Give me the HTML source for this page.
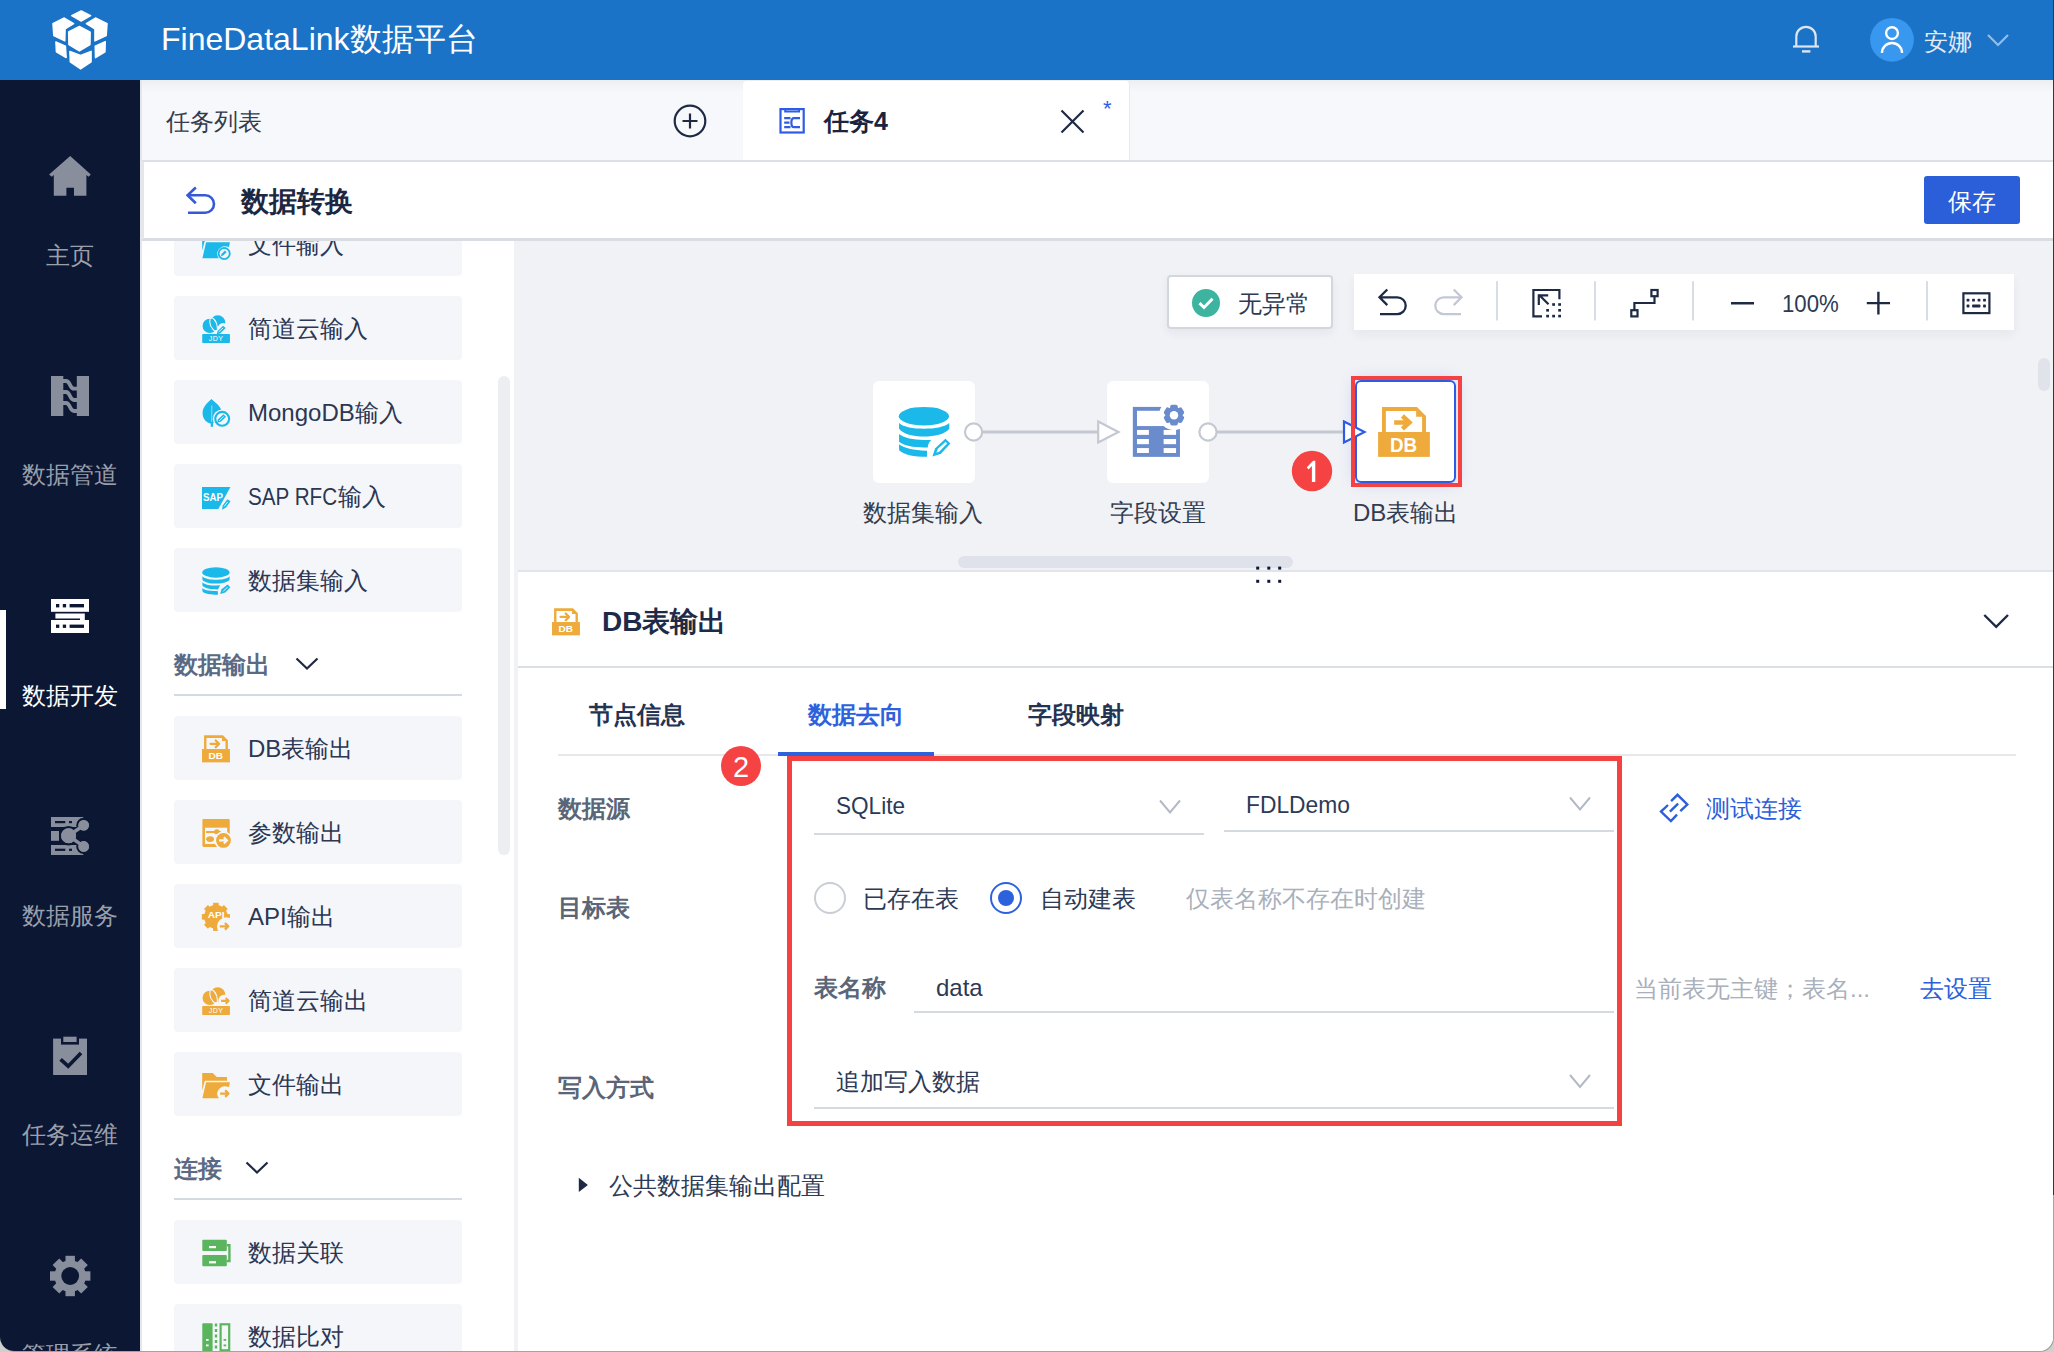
<!DOCTYPE html>
<html><head><meta charset="utf-8">
<style>
*{box-sizing:border-box;margin:0;padding:0}
html,body{width:2054px;height:1352px;overflow:hidden;background:#cfcfcf}
body{font-family:"Liberation Sans",sans-serif;position:relative}
.a{position:absolute}
.t{position:absolute;white-space:nowrap;line-height:1}
#win{position:absolute;left:0;top:0;width:2053px;height:1351px;overflow:hidden;border-radius:0 0 14px 14px;background:#fff;box-shadow:1px 1px 0 #a3a3a3}
#hdr{left:0;top:0;width:2054px;height:80px;background:#1b73c7}
#nav{left:0;top:80px;width:140px;height:1272px;background:#0b1733}
.navt{color:#9a9fab;font-size:24px;width:140px;text-align:center;left:0}
#tabbar{left:140px;top:80px;width:1914px;height:82px;background:#f7f8fb;border-bottom:2px solid #dcdfe5}
#titlebar{left:141px;top:162px;width:1913px;height:79px;background:#fff;border-bottom:3px solid #d9dce2;z-index:5}
.z{z-index:6}
#lp{left:141px;top:241px;width:373px;height:1111px;background:#fff}
.card{position:absolute;left:174px;width:288px;height:64px;background:#f5f6fa;border-radius:4px}
.ct{position:absolute;left:248px;font-size:24px;color:#2b3753;line-height:1;white-space:nowrap}
#canvas{left:514px;top:241px;width:1540px;height:330px;background:#f1f2f6}
#panel{left:518px;top:572px;width:1536px;height:780px;background:#fff}
.lbl{font-size:24px;font-weight:bold;color:#5a6577}
.ul{position:absolute;height:2px;background:#d5d9e0}
</style></head><body>
<div id="win">
<!-- header -->
<div id="hdr" class="a">
  <svg class="a" style="left:30px;top:0" width="100" height="80" viewBox="0 0 100 80" fill="#fff" stroke="#fff" stroke-width="1.4" stroke-linejoin="round">
  <polygon points="41.68,15.73 51.20,10.89 60.63,15.73 51.20,21.10"/>
  <polygon points="22.93,23.52 34.26,18.00 43.65,23.70 35.11,28.90 34.83,40.90 23.77,35.64"/>
  <polygon points="56.33,23.69 65.45,18.00 77.07,23.53 76.23,35.64 64.90,40.90 64.90,28.91"/>
  <polygon points="38.61,31.83 49.39,26.49 60.19,32.12 60.01,44.60 49.40,50.98 38.89,44.60"/>
  <polygon points="25.86,41.89 35.43,46.07 36.21,57.64 26.38,51.98"/>
  <polygon points="65.21,46.05 75.27,41.59 75.01,52.00 65.47,57.68"/>
  <polygon points="39.84,51.33 50.60,55.45 61.10,51.33 61.10,62.02 50.60,68.96 40.28,62.02"/>
  </svg>
  <div class="t" style="left:161px;top:23px;font-size:32px;color:#fff">FineDataLink数据平台</div>
  <svg class="a" style="left:1780px;top:10px" width="240" height="60" viewBox="1780 10 240 60">
   <g fill="none" stroke="#dde5f0" stroke-width="2.2">
    <path d="M1796.3,46.5 V36.5 A9.7,9.7 0 0 1 1815.7,36.5 V46.5"/>
    <path d="M1793,46.5 H1819"/>
   </g>
   <rect x="1802" y="50.2" width="8.4" height="2.4" fill="#dde5f0"/>
   <circle cx="1892" cy="39.8" r="21.9" fill="#3897ee"/>
   <g fill="none" stroke="#fff" stroke-width="2.4">
    <circle cx="1892" cy="33.1" r="5.9"/>
    <path d="M1882,53 A10,10 0 0 1 1902,53"/>
   </g>
   <path d="M1988,35 L1998,45 L2008,35" fill="none" stroke="#93bce9" stroke-width="2.2"/>
  </svg>
  <div class="t" style="left:1924px;top:30px;font-size:24px;color:#e4eaf3">安娜</div>
</div>
<!-- nav -->
<div id="nav" class="a"></div>
<svg class="a" style="left:0;top:0" width="140" height="1352" viewBox="0 0 140 1352">
 <g fill="#888e9c">
  <path d="M70.2,156 L90.8,174.4 L88.5,176.8 L86.4,175 V195.7 H74 V187.7 H66.4 V195.7 H53.8 V175 L51.8,176.8 L49.1,174.4 Z"/>
  <rect x="51" y="376" width="12.3" height="40"/>
  <rect x="76.8" y="376" width="12.2" height="40"/>
  <g fill="none" stroke="#888e9c" stroke-width="3.8">
   <path d="M63,381 H66 C70.5,381 69.5,388.7 74,388.7 H77"/>
   <path d="M63,392 H66 C70.5,392 69.5,400 74,400 H77"/>
   <path d="M63,403 H66 C70.5,403 69.5,411 74,411 H77"/>
  </g>
  <!-- service -->
  <rect x="51" y="817" width="32.3" height="10"/>
  <rect x="51" y="831" width="8" height="9.8"/>
  <rect x="51" y="845" width="32.3" height="10"/>
  <g stroke="#0b1733" stroke-width="2.2">
   <circle cx="68.6" cy="835.7" r="8.6"/>
   <circle cx="83.7" cy="825.3" r="6.4"/>
   <circle cx="83.7" cy="846.4" r="6.4"/>
  </g>
  <path d="M68.6,835.7 L83.7,825.3 M68.6,835.7 L83.7,846.4" stroke="#888e9c" stroke-width="3.6"/>
  <circle cx="68.6" cy="835.7" r="7.5"/>
  <circle cx="83.7" cy="825.3" r="5.3"/>
  <circle cx="83.7" cy="846.4" r="5.3"/>
  <g fill="#0b1733">
   <rect x="55" y="821" width="10.3" height="2.2"/><rect x="69" y="821" width="3" height="2.2"/>
   <rect x="55" y="848.7" width="10.3" height="2.2"/><rect x="69" y="848.7" width="3" height="2.2"/>
  </g>
  <!-- clipboard -->
  <rect x="53.1" y="1038.6" width="33.9" height="36.4"/>
  <rect x="61" y="1036" width="18" height="8.6" fill="#0b1733"/>
  <rect x="63.3" y="1036.7" width="13.3" height="5.3"/>
  <path d="M60.6,1059.3 L68.2,1066.2 L81,1053" fill="none" stroke="#0b1733" stroke-width="3.6"/>
  <!-- gear -->
  <g transform="translate(70.2,1276)">
   <circle r="15.8"/>
   <rect x="-4.7" y="-20.2" width="9.4" height="40.4"/>
   <rect x="-4.7" y="-20.2" width="9.4" height="40.4" transform="rotate(45)"/>
   <rect x="-4.7" y="-20.2" width="9.4" height="40.4" transform="rotate(90)"/>
   <rect x="-4.7" y="-20.2" width="9.4" height="40.4" transform="rotate(135)"/>
   <circle r="8.9" fill="#0b1733"/>
  </g>
 </g>
 <!-- dev (active) -->
 <g fill="#fff">
  <rect x="0" y="610" width="6" height="99"/>
  <rect x="51" y="599" width="38" height="12.8"/>
  <rect x="51" y="620" width="38" height="13"/>
  <path d="M55.4,613.6 H84.8 V620 H80 V618.6 H55.4 Z"/>
  <g fill="#0b1733">
   <rect x="56" y="604" width="3.3" height="3.4"/><rect x="62.8" y="604" width="3.3" height="3.4"/><rect x="69.6" y="604" width="14.4" height="3.4"/>
   <rect x="56" y="624.6" width="3.3" height="3.3"/><rect x="62.8" y="624.6" width="3.3" height="3.3"/><rect x="69.6" y="624.6" width="14.4" height="3.3"/>
  </g>
 </g>
</svg>
<div class="t navt" style="top:244px">主页</div>
<div class="t navt" style="top:463px">数据管道</div>
<div class="t navt" style="top:684px;color:#fff">数据开发</div>
<div class="t navt" style="top:904px">数据服务</div>
<div class="t navt" style="top:1123px">任务运维</div>
<div class="t navt" style="top:1343px">管理系统</div>
<!-- tab bar -->
<div id="tabbar" class="a"></div>
<div class="a" style="left:140px;top:80px;width:1914px;height:12px;background:linear-gradient(#eceef2,#f7f8fb)"></div>
<div class="t" style="left:166px;top:110px;font-size:24px;color:#333c4e">任务列表</div>
<svg class="a" style="left:670px;top:101px" width="40" height="40" viewBox="0 0 40 40" fill="none" stroke="#1e2a44" stroke-width="2.2">
 <circle cx="20" cy="20" r="15.3"/><path d="M20,12.5 V27.5 M12.5,20 H27.5"/>
</svg>
<div class="a" style="left:743px;top:81px;width:387px;height:79px;background:#fff;border-radius:4px 4px 0 0;border-right:1.5px solid #e8eaef"></div>
<svg class="a" style="left:770px;top:100px" width="44" height="44" viewBox="770 100 44 44" fill="none" stroke="#2f5ce6" stroke-width="2.2">
 <rect x="780.5" y="109.1" width="23.2" height="23.4"/>
 <path d="M785.2,109 V111.6 H799 V109" stroke-width="2"/>
 <path d="M784.2,118.2 H790.5 M784.2,122.6 H789.5 M784.2,127.1 H790.5" stroke-width="2.2"/>
 <path d="M800,118.2 H794 C790.5,118.2 790.5,127.1 794,127.1 H800" stroke-width="2.2"/>
</svg>
<div class="t" style="left:824px;top:109px;font-size:25px;font-weight:bold;color:#1a2440">任务4</div>
<svg class="a" style="left:1056px;top:105px" width="34" height="34" viewBox="0 0 34 34" fill="none" stroke="#1e2a44" stroke-width="2.2">
 <path d="M5.5,5.5 L27.5,27.5 M27.5,5.5 L5.5,27.5"/>
</svg>
<div class="t" style="left:1103px;top:98px;font-size:22px;color:#2f5ce6">*</div>
<div id="titlebar" class="a"></div>
<svg class="a z" style="left:180px;top:180px" width="40" height="40" viewBox="180 180 40 40" fill="none" stroke="#3559d9" stroke-width="2.6">
 <path d="M195.8,187.5 L187.6,195.3 L195.8,203.2"/>
 <path d="M187.6,195.3 H205.3 A8.7,8.7 0 0 1 205.3,212.7 H188"/>
</svg>
<div class="t z" style="left:241px;top:188px;font-size:28px;font-weight:bold;color:#1c2742">数据转换</div>
<div class="a z" style="left:1924px;top:176px;width:96px;height:48px;background:#2b5fd9;border-radius:3px"></div>
<div class="t z" style="left:1948px;top:190px;font-size:24px;color:#fff">保存</div>
<div id="lp" class="a"></div>
<div class="card" style="top:212px"></div>
<div class="ct" style="top:233px">文件输入</div>
<svg class="a" style="left:195px;top:221px" width="45" height="50" viewBox="0 0 1217 1352"><path d="M195,800 V325 H480 L590,430 H865 V535 H270 C250,560 240,650 195,800 Z" fill="#1bb8ea"/>
<path d="M200,1010 L300,575 H945 L920,700 C880,690 830,680 790,680 C690,690 600,790 600,880 C600,930 620,980 650,1010 Z" fill="#1bb8ea"/>
<circle cx="790" cy="880" r="150" fill="none" stroke="#1bb8ea" stroke-width="50"/><path d="M700,950 L715,890 L810,800 L855,845 L760,935 Z" fill="#1bb8ea"/></svg>
<div class="card" style="top:296px"></div>
<div class="ct" style="top:317px">简道云输入</div>
<svg class="a" style="left:195px;top:305px" width="45" height="50" viewBox="0 0 1217 1352"><circle cx="400" cy="565" r="195" fill="#1bb8ea"/><circle cx="615" cy="480" r="205" fill="#1bb8ea"/>
<path d="M410,360 C370,500 430,640 600,760" fill="none" stroke="#f5f6fa" stroke-width="30"/>
<path d="M460,340 C600,430 620,600 600,760" fill="none" stroke="#f5f6fa" stroke-width="30"/>
<rect x="130" y="760" width="250" height="30" fill="#f5f6fa"/><rect x="560" y="760" width="100" height="30" fill="#f5f6fa"/>
<circle cx="760" cy="640" r="150" fill="#f5f6fa"/><path d="M590,790 L610,700 L760,560 L830,625 L680,770 Z" fill="#1bb8ea"/><path d="M640,730 L760,620" stroke="#f5f6fa" stroke-width="24"/>
<rect x="195" y="785" width="750" height="240" rx="20" fill="#1bb8ea"/>
<text x="375" y="968" font-size="190" font-family="Liberation Sans" fill="#fff" textLength="380" lengthAdjust="spacing">JDY</text></svg>
<div class="card" style="top:380px"></div>
<div class="ct" style="top:401px">MongoDB输入</div>
<svg class="a" style="left:195px;top:390px" width="45" height="50" viewBox="0 0 1217 1352"><path d="M445,245 C330,350 205,460 205,620 C205,780 300,870 420,905 L470,905 C600,860 720,760 720,600 C720,460 560,350 445,245 Z" fill="#1bb8ea"/>
<path d="M455,420 L450,890" stroke="#8dd6f2" stroke-width="30"/>
<rect x="425" y="860" width="60" height="135" fill="#1bb8ea"/>
<circle cx="735" cy="780" r="255" fill="#f5f6fa"/>
<circle cx="735" cy="780" r="188" fill="none" stroke="#1bb8ea" stroke-width="58"/>
<path d="M595,885 L625,790 L770,655 L840,725 L700,860 Z" fill="#1bb8ea"/>
<path d="M655,835 L775,715" stroke="#f5f6fa" stroke-width="26"/></svg>
<div class="card" style="top:464px"></div>
<div class="ct" style="top:485px"><span style="display:inline-block;transform:scaleX(0.86);transform-origin:0 0;width:90px">SAP RFC</span>输入</div>
<svg class="a" style="left:195px;top:474px" width="45" height="50" viewBox="0 0 1217 1352"><path d="M190,350 H985 L645,945 H190 Z" fill="#1bb8ea"/>
<text x="218" y="742" font-size="300" font-weight="bold" font-family="Liberation Sans" fill="#fff" textLength="540" lengthAdjust="spacingAndGlyphs">SAP</text>
<path d="M640,975 L990,345" stroke="#f5f6fa" stroke-width="45"/>
<path d="M730,965 L750,850 L875,680 L960,740 L840,905 Z" fill="#1bb8ea"/>
<path d="M790,875 L885,750" stroke="#f5f6fa" stroke-width="26"/></svg>
<div class="card" style="top:548px"></div>
<div class="ct" style="top:569px">数据集输入</div>
<svg class="a" style="left:195px;top:556px" width="45" height="50" viewBox="0 0 1217 1352"><ellipse cx="565" cy="445" rx="370" ry="140" fill="#1bb8ea"/>
<path d="M200,545 C260,620 430,640 565,640 C700,640 880,620 935,545 V640 C880,720 700,745 565,745 C430,745 250,720 200,640 Z" fill="#1bb8ea"/>
<path d="M200,710 C260,780 430,800 565,800 L680,790 L620,905 C430,905 250,880 200,800 Z" fill="#1bb8ea"/>
<path d="M200,865 C260,935 430,950 620,950 V1045 C430,1045 250,1020 200,950 Z" fill="#1bb8ea"/>
<path d="M680,1030 L720,900 L880,770 L955,845 L820,990 Z" fill="#1bb8ea"/>
<path d="M760,960 L880,840" stroke="#f5f6fa" stroke-width="26"/></svg>
<div class="card" style="top:716px"></div>
<div class="ct" style="top:737px">DB表输出</div>
<svg class="a" style="left:195px;top:725px" width="45" height="50" viewBox="0 0 1217 1352"><path d="M245,650 V275 H755 L890,415 V650 Z" fill="#eeaa3a"/>
<path d="M310,650 V350 H730 V435 H825 V650 Z" fill="#f5f6fa"/>
<path d="M420,510 H650 M560,420 L650,510 L560,600" fill="none" stroke="#eeaa3a" stroke-width="62" stroke-linecap="round" stroke-linejoin="round"/>
<rect x="190" y="650" width="755" height="360" fill="#eeaa3a"/>
<text x="368" y="920" font-size="262" font-weight="bold" font-family="Liberation Sans" fill="#fff" textLength="392" lengthAdjust="spacingAndGlyphs">DB</text></svg>
<div class="card" style="top:800px"></div>
<div class="ct" style="top:821px">参数输出</div>
<svg class="a" style="left:195px;top:809px" width="45" height="50" viewBox="0 0 1217 1352"><rect x="200" y="270" width="740" height="755" rx="30" fill="#eeaa3a"/>
<rect x="270" y="505" width="600" height="440" fill="#f5f6fa"/>
<path d="M300,620 H700 M300,815 H500" stroke="#eeaa3a" stroke-width="52"/>
<ellipse cx="590" cy="615" rx="75" ry="70" fill="#eeaa3a"/><ellipse cx="410" cy="815" rx="100" ry="75" fill="#eeaa3a"/>
<circle cx="770" cy="850" r="250" fill="#f5f6fa"/>
<circle cx="770" cy="850" r="200" fill="#eeaa3a"/>
<path d="M650,850 H860 M780,765 L865,850 L780,935" fill="none" stroke="#f5f6fa" stroke-width="58"/></svg>
<div class="card" style="top:884px"></div>
<div class="ct" style="top:905px">API输出</div>
<svg class="a" style="left:195px;top:893px" width="45" height="50" viewBox="0 0 1217 1352"><g transform="translate(565,645)" fill="#eeaa3a"><circle r="320"/>
<rect x="-75" y="-380" width="150" height="760"/><rect x="-75" y="-380" width="150" height="760" transform="rotate(45)"/><rect x="-75" y="-380" width="150" height="760" transform="rotate(90)"/><rect x="-75" y="-380" width="150" height="760" transform="rotate(135)"/></g>
<circle cx="850" cy="910" r="255" fill="#f5f6fa"/>
<text x="345" y="685" font-size="270" font-weight="bold" font-family="Liberation Sans" fill="#fff" textLength="455" lengthAdjust="spacingAndGlyphs">API</text>
<path d="M670,900 H900 M810,810 L900,900 L810,990" fill="none" stroke="#eeaa3a" stroke-width="62" stroke-linejoin="round"/></svg>
<div class="card" style="top:968px"></div>
<div class="ct" style="top:989px">简道云输出</div>
<svg class="a" style="left:195px;top:977px" width="45" height="50" viewBox="0 0 1217 1352"><circle cx="400" cy="565" r="195" fill="#eeaa3a"/><circle cx="615" cy="480" r="205" fill="#eeaa3a"/>
<path d="M410,360 C370,500 430,640 600,760" fill="none" stroke="#f5f6fa" stroke-width="30"/>
<path d="M460,340 C600,430 620,600 600,760" fill="none" stroke="#f5f6fa" stroke-width="30"/>
<rect x="130" y="760" width="250" height="30" fill="#f5f6fa"/><rect x="560" y="760" width="100" height="30" fill="#f5f6fa"/>
<circle cx="790" cy="640" r="160" fill="#f5f6fa"/><path d="M705,645 H905 M830,565 L910,645 L830,725" fill="none" stroke="#eeaa3a" stroke-width="58" stroke-linejoin="round"/>
<rect x="195" y="785" width="750" height="240" rx="20" fill="#eeaa3a"/>
<text x="375" y="968" font-size="190" font-family="Liberation Sans" fill="#fff" textLength="380" lengthAdjust="spacing">JDY</text></svg>
<div class="card" style="top:1052px"></div>
<div class="ct" style="top:1073px">文件输出</div>
<svg class="a" style="left:195px;top:1061px" width="45" height="50" viewBox="0 0 1217 1352"><path d="M195,800 V325 H480 L590,430 H865 V535 H270 C250,560 240,650 195,800 Z" fill="#eeaa3a"/>
<path d="M200,1010 L300,575 H945 L920,700 C880,690 830,680 790,680 C690,690 600,790 600,880 C600,930 620,980 650,1010 Z" fill="#eeaa3a"/>
<path d="M680,880 H900 M815,790 L905,880 L815,970" fill="none" stroke="#eeaa3a" stroke-width="62" stroke-linejoin="round"/></svg>
<div class="card" style="top:1220px"></div>
<div class="ct" style="top:1241px">数据关联</div>
<div class="card" style="top:1304px"></div>
<div class="ct" style="top:1325px">数据比对</div>
<svg class="a" style="left:195px;top:1229px" width="45" height="123" viewBox="195 1229 45 123">
<rect x="202.3" y="1239.7" width="24.5" height="11.3" rx="1" fill="#5bb55f"/><rect x="202.3" y="1255" width="24.5" height="11.3" rx="1" fill="#5bb55f"/>
<path d="M226.8,1245.2 H229.4 V1261 H226.8" fill="none" stroke="#5bb55f" stroke-width="2.4"/>
<rect x="209" y="1246" width="7" height="2.2" fill="#fff"/><rect x="209" y="1261.2" width="7" height="2.2" fill="#fff"/>
<rect x="202.3" y="1323.2" width="10.3" height="28" rx="1" fill="#5bb55f"/>
<path d="M216,1323.5 V1351" stroke="#5bb55f" stroke-width="2.4" stroke-dasharray="3,2.5"/>
<rect x="220.6" y="1324.3" width="8.6" height="26" fill="none" stroke="#5bb55f" stroke-width="2.2"/>
<rect x="206" y="1339" width="2.6" height="1.8" fill="#fff"/><rect x="206" y="1344.5" width="2.6" height="1.8" fill="#fff"/>
<rect x="223.6" y="1339" width="2.6" height="1.8" fill="#5bb55f"/><rect x="223.6" y="1344.5" width="2.6" height="1.8" fill="#5bb55f"/>
</svg>
<div class="t" style="left:174px;top:653px;font-size:24px;font-weight:bold;color:#5b6a84">数据输出</div>
<svg class="a" style="left:293.5px;top:654px" width="26" height="20" viewBox="0 0 26 20"><path d="M2.5,4.5 L13,14.5 L23.5,4.5" fill="none" stroke="#1e2a44" stroke-width="2.2"/></svg>
<div class="a" style="left:174px;top:694px;width:288px;height:2px;background:#d5dae2"></div>
<div class="t" style="left:174px;top:1157px;font-size:24px;font-weight:bold;color:#5b6a84">连接</div>
<svg class="a" style="left:244.0px;top:1158px" width="26" height="20" viewBox="0 0 26 20"><path d="M2.5,4.5 L13,14.5 L23.5,4.5" fill="none" stroke="#1e2a44" stroke-width="2.2"/></svg>
<div class="a" style="left:174px;top:1198px;width:288px;height:2px;background:#d5dae2"></div>
<div class="a" style="left:498px;top:376px;width:12px;height:479px;background:#eceef2;border-radius:6px"></div>
<div id="canvas" class="a"></div>
<div class="a" style="left:140px;top:80px;width:2px;height:1272px;background:#e3e6ea;z-index:7"></div>
<div class="a" style="left:142px;top:161px;width:2px;height:78px;background:#e3e6ea;z-index:7"></div>
<!-- status -->
<div class="a" style="left:1167px;top:275px;width:166px;height:54px;background:#fff;border:2px solid #d2d6dd;border-radius:4px;box-shadow:0 4px 10px rgba(30,42,68,0.06)"></div>
<svg class="a" style="left:1190px;top:287px" width="32" height="32" viewBox="0 0 32 32"><circle cx="16" cy="16" r="14" fill="#3db4a0"/><path d="M9.5,16.2 L14,20.5 L22.5,11.8" fill="none" stroke="#fff" stroke-width="3"/></svg>
<div class="t" style="left:1238px;top:292px;font-size:24px;color:#2c3a55">无异常</div>
<!-- toolbar -->
<div class="a" style="left:1354px;top:274px;width:660px;height:56px;background:#fff;box-shadow:0 5px 10px rgba(30,42,68,0.05)"></div>
<svg class="a" style="left:1354px;top:274px" width="660" height="56" viewBox="1354 274 660 56" fill="none" stroke="#1e2a44" stroke-width="2.3">
 <path d="M1387.3,289.5 L1379.5,297.3 L1387.3,305.1 M1379.5,297.3 H1397.3 A8.4,8.4 0 0 1 1397.3,314.1 H1380"/>
 <path d="M1453.7,289.5 L1461.5,297.3 L1453.7,305.1 M1461.5,297.3 H1443.7 A8.4,8.4 0 0 0 1443.7,314.1 H1461" stroke="#c3c9d3"/>
 <path d="M1497,281.3 V320.5 M1595,281.3 V320.5 M1693,281.3 V320.5 M1927,281.3 V320.5" stroke="#d8dce4" stroke-width="2"/>
 <path d="M1542,316.4 H1533.4 V290 H1559.4 V299.2" stroke-width="2.2"/>
 <path d="M1548.5,304.3 L1539,294.8 M1538.8,305 V295.4 H1548.2" stroke-width="2.2"/>
 <g fill="#1e2a44" stroke="none">
  <rect x="1552.2" y="303.2" width="2.8" height="2.6"/><rect x="1558.2" y="303.2" width="2.8" height="2.6"/>
  <rect x="1558.2" y="309" width="2.8" height="2.6"/><rect x="1546.2" y="309" width="2.8" height="2.6"/>
  <rect x="1546.2" y="314.8" width="2.8" height="2.6"/><rect x="1552.2" y="314.8" width="2.8" height="2.6"/><rect x="1558.2" y="314.8" width="2.8" height="2.6"/>
 </g>
 <rect x="1651.4" y="290" width="6.2" height="6.2" stroke-width="2.2"/>
 <rect x="1631.3" y="310.2" width="6.2" height="6.2" stroke-width="2.2"/>
 <path d="M1654.5,296.5 V303 H1634.4 V310" stroke-width="2.2"/>
 <path d="M1731,303.2 H1754 M1866.8,303.1 H1890 M1878.4,291.8 V314.4" stroke-width="2.4"/>
 <rect x="1963.4" y="293.3" width="26" height="19.8" stroke-width="2.2"/>
 <g fill="#1e2a44" stroke="none">
  <rect x="1966.6" y="298.8" width="2.8" height="2.8" rx="0.6"/><rect x="1972.1" y="298.8" width="2.8" height="2.8" rx="0.6"/><rect x="1977.6" y="298.8" width="2.8" height="2.8" rx="0.6"/><rect x="1983.1" y="298.8" width="2.8" height="2.8" rx="0.6"/>
  <rect x="1966.6" y="304.6" width="2.8" height="2.8" rx="0.6"/><rect x="1972.1" y="304.6" width="8.3" height="2.8" rx="0.6"/><rect x="1983.1" y="304.6" width="2.8" height="2.8" rx="0.6"/>
 </g>
</svg>
<div class="t" style="left:1782px;top:292px;font-size:24px;color:#2c3a55"><span style="display:inline-block;transform:scaleX(0.925);transform-origin:0 0">100%</span></div>
<!-- flow -->
<div class="a" style="left:873px;top:381px;width:102px;height:102px;background:#fff;border-radius:6px"></div>
<div class="a" style="left:1107px;top:381px;width:102px;height:102px;background:#fff;border-radius:6px"></div>
<div class="a" style="left:1355px;top:380px;width:101px;height:103px;background:#fff;border:2px solid #2e5be6;border-radius:6px;box-shadow:0 0 16px rgba(46,91,230,0.22)"></div>
<svg class="a" style="left:850px;top:400px" width="520" height="64" viewBox="850 400 520 64">
 <path d="M983,432 H1098 M1217,432 H1343" stroke="#c3c8d1" stroke-width="3.2"/>
 <circle cx="973.6" cy="432" r="8.6" fill="#fff" stroke="#c3c8d1" stroke-width="2.2"/>
 <circle cx="1208" cy="432" r="8.6" fill="#fff" stroke="#c3c8d1" stroke-width="2.2"/>
 <path d="M1098.2,421.5 L1118.5,432 L1098.2,442.5 Z" fill="#fff" stroke="#c3c8d1" stroke-width="2.2"/>
 <path d="M1344,421.5 L1364.5,432 L1344,442.5 Z" fill="#fff" stroke="#2e5be6" stroke-width="2.2"/>
</svg>
<svg class="a" style="left:890px;top:395px" width="70" height="70" viewBox="0 0 1352 1352" fill="#1bb8ea">
 <ellipse cx="655" cy="410" rx="485" ry="180"/>
 <path d="M175,540 C260,620 450,650 655,650 C860,650 1050,620 1145,540 V650 C1060,760 860,800 655,800 C450,800 260,760 175,650 Z"/>
 <path d="M175,755 C260,830 450,870 655,870 L795,870 C760,900 730,960 730,1015 C700,1015 680,1015 655,1015 C450,1015 260,980 175,905 Z"/>
 <path d="M175,950 C260,1020 450,1065 715,1075 V1195 C450,1195 260,1150 175,1060 Z"/>
 <path d="M820,1190 L870,1035 L1070,845 L1165,935 L985,1135 Z"/>
 <path d="M895,1115 L925,1040 L1075,905 L1105,935 L955,1090 Z" fill="#fff"/>
</svg>
<svg class="a" style="left:1123px;top:395px" width="70" height="70" viewBox="0 0 1352 1352" fill="#6a8bcc">
 <rect x="190" y="230" width="910" height="965"/>
 <rect x="270" y="305" width="700" height="295" fill="#fff"/>
 <g fill="#fff"><rect x="270" y="675" width="230" height="95"/><rect x="270" y="850" width="230" height="100"/><rect x="270" y="1025" width="230" height="95"/>
 <rect x="785" y="675" width="240" height="95"/><rect x="785" y="850" width="240" height="100"/><rect x="785" y="1025" width="240" height="95"/></g>
 <circle cx="985" cy="390" r="290" fill="#fff"/>
 <g transform="translate(985,390)"><circle r="165"/>
  <rect x="-75" y="-200" width="150" height="400" rx="40"/><rect x="-75" y="-200" width="150" height="400" rx="40" transform="rotate(60)"/><rect x="-75" y="-200" width="150" height="400" rx="40" transform="rotate(120)"/>
  <circle r="82" fill="#fff"/></g>
</svg>
<svg class="a" style="left:1368px;top:395px" width="70" height="70" viewBox="0 0 1352 1352" fill="#eeaa3a">
 <path d="M270,715 V230 H945 L1120,405 V715 Z"/>
 <path d="M345,715 V310 H930 V420 H1045 V715 Z" fill="#fff"/>
 <path d="M505,530 H800 M665,405 L800,530 L665,655" fill="none" stroke="#eeaa3a" stroke-width="88"/>
 <rect x="195" y="715" width="1000" height="480"/>
 <text x="425" y="1095" font-size="375" font-weight="bold" font-family="Liberation Sans" fill="#fff" textLength="525" lengthAdjust="spacingAndGlyphs">DB</text>
</svg>
<div class="a" style="left:1351px;top:376px;width:111px;height:111px;border:4.5px solid #f44242"></div>
<svg class="a" style="left:1288px;top:447px" width="48" height="48" viewBox="1288 447 48 48"><circle cx="1312" cy="471" r="20.2" fill="#f54343"/><path d="M1306.8,467.2 L1313.2,460.8 H1315.3 V482 H1311.9 V466 L1308.6,469.6 Z" fill="#fff"/></svg>
<div class="t" style="left:863px;top:501px;font-size:24px;color:#333d50">数据集输入</div>
<div class="t" style="left:1110px;top:501px;font-size:24px;color:#333d50">字段设置</div>
<div class="t" style="left:1353px;top:501px;font-size:24px;color:#333d50">DB表输出</div>
<div class="a" style="left:958px;top:556px;width:335px;height:12px;border-radius:6px;background:#dfe2ea"></div>
<div class="a" style="left:2038px;top:358px;width:12px;height:33px;border-radius:6px;background:#e0e3ea"></div>
<div id="panel" class="a"></div>
<div class="a" style="left:514px;top:570px;width:4px;height:782px;background:#f1f2f6"></div>
<div class="a" style="left:518px;top:570px;width:1536px;height:2px;background:#e1e4ea"></div>
<svg class="a" style="left:1250px;top:562px" width="40" height="26" viewBox="1250 562 40 26" fill="#0f1a36"><rect x="1256.2" y="566.6" width="3" height="3"/><rect x="1267.3" y="566.6" width="3" height="3"/><rect x="1278.2" y="566.6" width="3" height="3"/><rect x="1256.2" y="579.8" width="3" height="3"/><rect x="1267.3" y="579.8" width="3" height="3"/><rect x="1278.2" y="579.8" width="3" height="3"/></svg>
<svg class="a" style="left:545px;top:598px" width="45" height="50" viewBox="0 0 1217 1352">
<path d="M245,650 V275 H755 L890,415 V650 Z" fill="#eeaa3a"/>
<path d="M310,650 V350 H730 V435 H825 V650 Z" fill="#fff"/>
<path d="M420,510 H650 M560,420 L650,510 L560,600" fill="none" stroke="#eeaa3a" stroke-width="62" stroke-linecap="round" stroke-linejoin="round"/>
<rect x="190" y="650" width="755" height="360" fill="#eeaa3a"/>
<text x="368" y="920" font-size="262" font-weight="bold" font-family="Liberation Sans" fill="#fff" textLength="392" lengthAdjust="spacingAndGlyphs">DB</text></svg>
<div class="t" style="left:602px;top:608px;font-size:28px;font-weight:bold;color:#1e2b48">DB表输出</div>
<svg class="a" style="left:1978px;top:606px" width="36" height="28" viewBox="1978 606 36 28"><path d="M1984.3,615 L1996.2,626.8 L2008,615" fill="none" stroke="#1e2a44" stroke-width="2.4"/></svg>
<div class="a" style="left:518px;top:666px;width:1536px;height:2px;background:#dadee5"></div>
<div class="t" style="left:589px;top:702.5px;font-size:24px;color:#243352;font-weight:bold;">节点信息</div>
<div class="t" style="left:808px;top:702.5px;font-size:24px;color:#2e62dc;font-weight:bold;">数据去向</div>
<div class="t" style="left:1028px;top:702.5px;font-size:24px;color:#243352;font-weight:bold;">字段映射</div>
<div class="a" style="left:558px;top:754px;width:1458px;height:1.5px;background:#e6e8ec"></div>
<div class="a" style="left:778px;top:752px;width:156px;height:3.6px;background:#2e62dc"></div>
<div class="t" style="left:558px;top:796.5px;font-size:24px;color:#5a6577;font-weight:bold;">数据源</div>
<div class="t" style="left:558px;top:896.0px;font-size:24px;color:#5a6577;font-weight:bold;">目标表</div>
<div class="t" style="left:558px;top:1075.5px;font-size:24px;color:#5a6577;font-weight:bold;">写入方式</div>
<div class="t" style="left:836px;top:794px;font-size:24px;color:#2c3a55;"><span style="display:inline-block;transform:scaleX(0.94);transform-origin:0 0">SQLite</span></div>
<div class="ul" style="left:814px;top:833px;width:390px"></div>
<div class="t" style="left:1246px;top:793.0px;font-size:24px;color:#2c3a55;"><span style="display:inline-block;transform:scaleX(0.95);transform-origin:0 0">FDLDemo</span></div>
<div class="ul" style="left:1224px;top:830px;width:390px"></div>
<div class="t" style="left:836px;top:1070.0px;font-size:24px;color:#2c3a55;">追加写入数据</div>
<div class="ul" style="left:814px;top:1107px;width:800px"></div>
<div class="t" style="left:814px;top:975.5px;font-size:24px;color:#5a6577;font-weight:bold;">表名称</div>
<div class="t" style="left:936px;top:975.5px;font-size:24px;color:#2c3a55;">data</div>
<div class="ul" style="left:914px;top:1010.5px;width:700px"></div>
<svg class="a" style="left:1150px;top:790px" width="40" height="30" viewBox="1150 790 40 30"><path d="M1160,800.5 L1170,812.5 L1180,800.5" fill="none" stroke="#b3bac6" stroke-width="2"/></svg>
<svg class="a" style="left:1560px;top:787px" width="40" height="30" viewBox="1560 787 40 30"><path d="M1570,797.5 L1580,809.5 L1590,797.5" fill="none" stroke="#b3bac6" stroke-width="2"/></svg>
<svg class="a" style="left:1560px;top:1065px" width="40" height="30" viewBox="1560 1065 40 30"><path d="M1570,1075 L1580,1087 L1590,1075" fill="none" stroke="#b3bac6" stroke-width="2"/></svg>
<div class="a" style="left:814px;top:882px;width:32px;height:32px;border-radius:50%;border:2px solid #c9ced6;background:#fff"></div>
<div class="t" style="left:863px;top:886.5px;font-size:24px;color:#2c3a55;">已存在表</div>
<div class="a" style="left:989.5px;top:882px;width:32px;height:32px;border-radius:50%;border:2.4px solid #2e62dc;background:#fff"></div>
<div class="a" style="left:997.5px;top:890px;width:16px;height:16px;border-radius:50%;background:#2e62dc"></div>
<div class="t" style="left:1039.5px;top:886.5px;font-size:24px;color:#2c3a55;">自动建表</div>
<div class="t" style="left:1186px;top:886.5px;font-size:24px;color:#a9afbb;">仅表名称不存在时创建</div>
<svg class="a" style="left:1655px;top:790px" width="40" height="36" viewBox="1655 790 40 36" fill="none" stroke="#2d5fd9" stroke-width="2.4">
<path d="M1671.1,801.2 L1677.5,794.8 L1687.3,804.5 L1680.3,811.2 M1668,805 L1661,811.6 L1670.9,821 L1677,814.6 M1669.9,811.7 L1678.1,803.7"/></svg>
<div class="t" style="left:1706px;top:797.0px;font-size:24px;color:#2d5fd9;">测试连接</div>
<div class="t" style="left:1634px;top:976.5px;font-size:24px;color:#a9afbb;">当前表无主键；表名...</div>
<div class="t" style="left:1920px;top:976.5px;font-size:24px;color:#2d5fd9;">去设置</div>
<svg class="a" style="left:574px;top:1172px" width="20" height="26" viewBox="574 1172 20 26"><path d="M578.8,1177.7 L587.9,1184.9 L578.8,1192 Z" fill="#1e2a44"/></svg>
<div class="t" style="left:609px;top:1174.0px;font-size:24px;color:#2c3a55;">公共数据集输出配置</div>
<div class="a" style="left:787px;top:755.5px;width:835px;height:370px;border:5px solid #f44242"></div>
<div class="a" style="left:721px;top:746px;width:40px;height:40px;border-radius:50%;background:#f54343"></div>
<div class="t" style="left:721px;top:753px;width:40px;text-align:center;font-size:29px;color:#fff">2</div>
</div>
<div class="a" style="left:2053px;top:0;width:1px;height:1195px;background:#3a352f"></div>
</body></html>
